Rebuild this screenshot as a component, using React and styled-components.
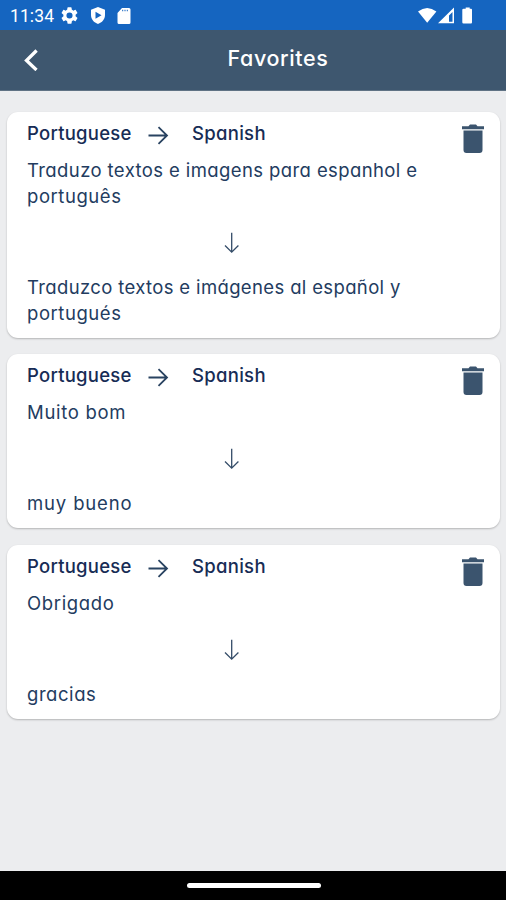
import React from 'react';
import styled, { createGlobalStyle } from 'styled-components';

const GlobalStyle = createGlobalStyle`
  * { box-sizing: border-box; }
  body { margin: 0; background: #ecedef; }
`;

const Screen = styled.div`
  display: flex;
  flex-direction: column;
  height: 900px;
  background: #ecedef;
  color: #233c5f;
  font-family: Inter, sans-serif;
  font-feature-settings: 'cv11' 1;
`;

const StatusBar = styled.div`
  display: flex;
  align-items: center;
  flex: none;
  height: 30px;
  padding: 1px 32px 0 10px;
  background: #1565c0;
  color: #fff;
`;

const Clock = styled.span`
  width: 52px;
  font: 400 17.5px/20px Roboto, sans-serif;
  letter-spacing: 0.1px;
  white-space: nowrap;
`;

const StatusIcons = styled.div`
  display: flex;
  align-items: center;
  svg { display: block; }
`;

const NoticeIcons = styled(StatusIcons)`
  flex: 1;
  gap: 11px;
  svg:first-child { margin-left: -1px; margin-right: 1px; }
`;

const Header = styled.header`
  display: grid;
  grid-template-columns: 50px 1fr 50px;
  align-items: center;
  flex: none;
  height: 61px;
  background: #3e576f;
  border-bottom: 1px solid #5f7284;
  color: #fff;
`;

const BackButton = styled.button`
  display: flex;
  padding: 0 0 0 24px;
  border: 0;
  background: none;
  color: inherit;
`;

const Title = styled.h1`
  margin: 0 0 4px;
  padding-left: 50px;
  font-size: 21.5px;
  font-weight: 500;
  line-height: 30px;
  letter-spacing: ${(p) => p.$tracking}px;
  text-align: center;
  white-space: nowrap;
`;

const List = styled.main`
  display: flex;
  flex: 1;
  flex-direction: column;
  gap: 16.4px;
  padding: 21px 6px 0 7px;
`;

const Card = styled.article`
  padding: 7px 16px 12px 20px;
  border-radius: 11px;
  background: #fff;
  box-shadow: 0 1px 2px rgba(0, 0, 0, 0.24);
`;

const CardHead = styled.div`
  display: flex;
  height: 38px;
`;

const Language = styled.span`
  width: ${(p) => p.$width}px;
  color: #172c55;
  font-size: 18.5px;
  font-weight: 500;
  line-height: 28px;
  letter-spacing: ${(p) => p.$tracking}px;
  white-space: nowrap;
`;

const Direction = styled.span`
  width: 44px;
  padding-top: 6px;
  svg { display: block; }
`;

const DeleteButton = styled.button`
  display: block;
  height: 30px;
  margin: 5px 0 0 auto;
  padding: 0;
  border: 0;
  background: none;
  svg { display: block; }
`;

const Phrase = styled.p`
  margin: 0;
  font-size: 18.5px;
  line-height: 26px;
`;

const Line = styled.span`
  display: block;
  letter-spacing: ${(p) => p.$tracking}px;
  white-space: nowrap;
`;

const Divider = styled.div`
  height: 65px;
  padding: 23px 0 0 197px;
  svg { display: block; }
`;

const NavBar = styled.footer`
  display: flex;
  flex: none;
  align-items: center;
  justify-content: center;
  height: 29px;
  padding: 0 0 1px 1px;
  background: #000;
`;

const HomeHandle = styled.div`
  width: 134px;
  height: 5px;
  border-radius: 2.5px;
  background: #fff;
`;

const GearIcon = () => (
  <svg width="17" height="17" viewBox="2 2 20 20" fill="#fff">
    <path d="M19.14 12.94c.04-.3.06-.61.06-.94s-.02-.64-.07-.94l2.03-1.58a.49.49 0 0 0 .12-.61l-1.92-3.32a.49.49 0 0 0-.59-.22l-2.39.96a7 7 0 0 0-1.62-.94l-.36-2.54a.48.48 0 0 0-.48-.41h-3.84a.48.48 0 0 0-.47.41l-.36 2.54c-.59.24-1.13.57-1.62.94l-2.39-.96a.48.48 0 0 0-.59.22L2.74 8.87a.48.48 0 0 0 .12.61l2.03 1.58a6 6 0 0 0 0 1.88l-2.03 1.58a.49.49 0 0 0-.12.61l1.92 3.32c.12.22.37.29.59.22l2.39-.96c.5.38 1.03.7 1.62.94l.36 2.54c.05.24.24.41.48.41h3.84c.24 0 .44-.17.47-.41l.36-2.54a7 7 0 0 0 1.62-.94l2.39.96c.22.08.47 0 .59-.22l1.92-3.32a.48.48 0 0 0-.12-.61zM12 15.6a3.6 3.6 0 1 1 0-7.2 3.6 3.6 0 0 1 0 7.2z" />
  </svg>
);

const ShieldIcon = () => (
  <svg width="16" height="17" viewBox="0 0 16 17" fill="#fff">
    <path fillRule="evenodd" d="M8 0 15 2.7V8c0 4.300-2.900 7.500-7 9-4.100-1.500-7-4.700-7-9V2.700ZM5.500 4.700v7L11.500 8.200Z" />
  </svg>
);

const CardIcon = () => (
  <svg width="14" height="16" viewBox="0 0 14 16" fill="#fff">
    <path fillRule="evenodd" d="M5 0h7q1.500 0 1.500 1.500v13q0 1.500-1.500 1.500H2Q.5 16 .5 14.500V5Zm.2 1.800v1.400h1V1.800Zm2.300 0v1.400h1V1.800Zm2.300 0v1.400h1V1.800Z" />
  </svg>
);

const SystemIcon = () => (
  <svg width="56" height="18" viewBox="0 0 56 18" fill="#fff">
    <path d="M0 4.500Q9.200-2.500 18.400 4.500L9.200 15.700Z" />
    <path fillRule="evenodd" d="M36 .5V16.200H20ZM34.500 5 31 8.600v6.100h3.500Z" />
    <path d="M45.700 1.700h2V.5h4v1.200h1.300q1 0 1 1v12.600q0 1.200-1 1.200h-7.500q-1.200 0-1.200-1.200V2.700q0-1 1.400-1Z" />
  </svg>
);

const BackIcon = () => (
  <svg width="15" height="22" viewBox="0 0 15 22" fill="none" stroke="#fff" strokeWidth="3.300">
    <path d="M12.600 1.500 2.500 11.500l10 9.500" />
  </svg>
);

const RightIcon = () => (
  <svg width="21" height="20" viewBox="0 0 21 20" fill="none" stroke="#294361" strokeWidth="1.800">
    <path d="M.5 10.500h18M10.500 2.200l8.500 8.300-8.500 8.300" />
  </svg>
);

const DownIcon = () => (
  <svg width="16" height="22" viewBox="0 0 16 22" fill="none" stroke="#344c68" strokeWidth="1.300">
    <path d="M7.700 .700v19.500M1 13.500l6.700 6.700 6.700-6.700" />
  </svg>
);

const TrashIcon = () => (
  <svg width="22" height="30" viewBox="0 0 22 30" fill="#3b546e">
    <path d="M0 2.200h6.500L8 .6h6l1.500 1.600H22v3H0ZM1.500 6.400h19V26q0 3-3 3h-13q-3 0-3-3Z" />
  </svg>
);

const favorites = [
  {
    source: [['Traduzo textos e imagens para espanhol e', 0.4], ['português', 0.55]],
    target: [['Traduzco textos e imágenes al español y', 0.36], ['portugués', 0.55]],
  },
  { source: [['Muito bom', 0.7]], target: [['muy bueno', 0.85]] },
  { source: [['Obrigado', 0.65]], target: [['gracias', 0.55]] },
];

const PhraseText = ({ lines }) => (
  <Phrase>
    {lines.map(([text, tracking]) => (
      <Line key={text} $tracking={tracking}>{text}</Line>
    ))}
  </Phrase>
);

const FavoriteCard = ({ source, target }) => (
  <Card>
    <CardHead>
      <Language $width={121} $tracking={0.25}>Portuguese</Language>
      <Direction><RightIcon /></Direction>
      <Language $width={90} $tracking={0.3}>Spanish</Language>
      <DeleteButton aria-label="Delete"><TrashIcon /></DeleteButton>
    </CardHead>
    <PhraseText lines={source} />
    <Divider><DownIcon /></Divider>
    <PhraseText lines={target} />
  </Card>
);

export default function App() {
  return (
    <Screen>
      <GlobalStyle />
      <StatusBar>
        <Clock>11:34</Clock>
        <NoticeIcons><GearIcon /><ShieldIcon /><CardIcon /></NoticeIcons>
        <StatusIcons><SystemIcon /></StatusIcons>
      </StatusBar>
      <Header>
        <BackButton aria-label="Back"><BackIcon /></BackButton>
        <Title $tracking={0.6}>Favorites</Title>
      </Header>
      <List>
        {favorites.map((item) => (
          <FavoriteCard key={item.source[0][0]} {...item} />
        ))}
      </List>
      <NavBar><HomeHandle /></NavBar>
    </Screen>
  );
}
